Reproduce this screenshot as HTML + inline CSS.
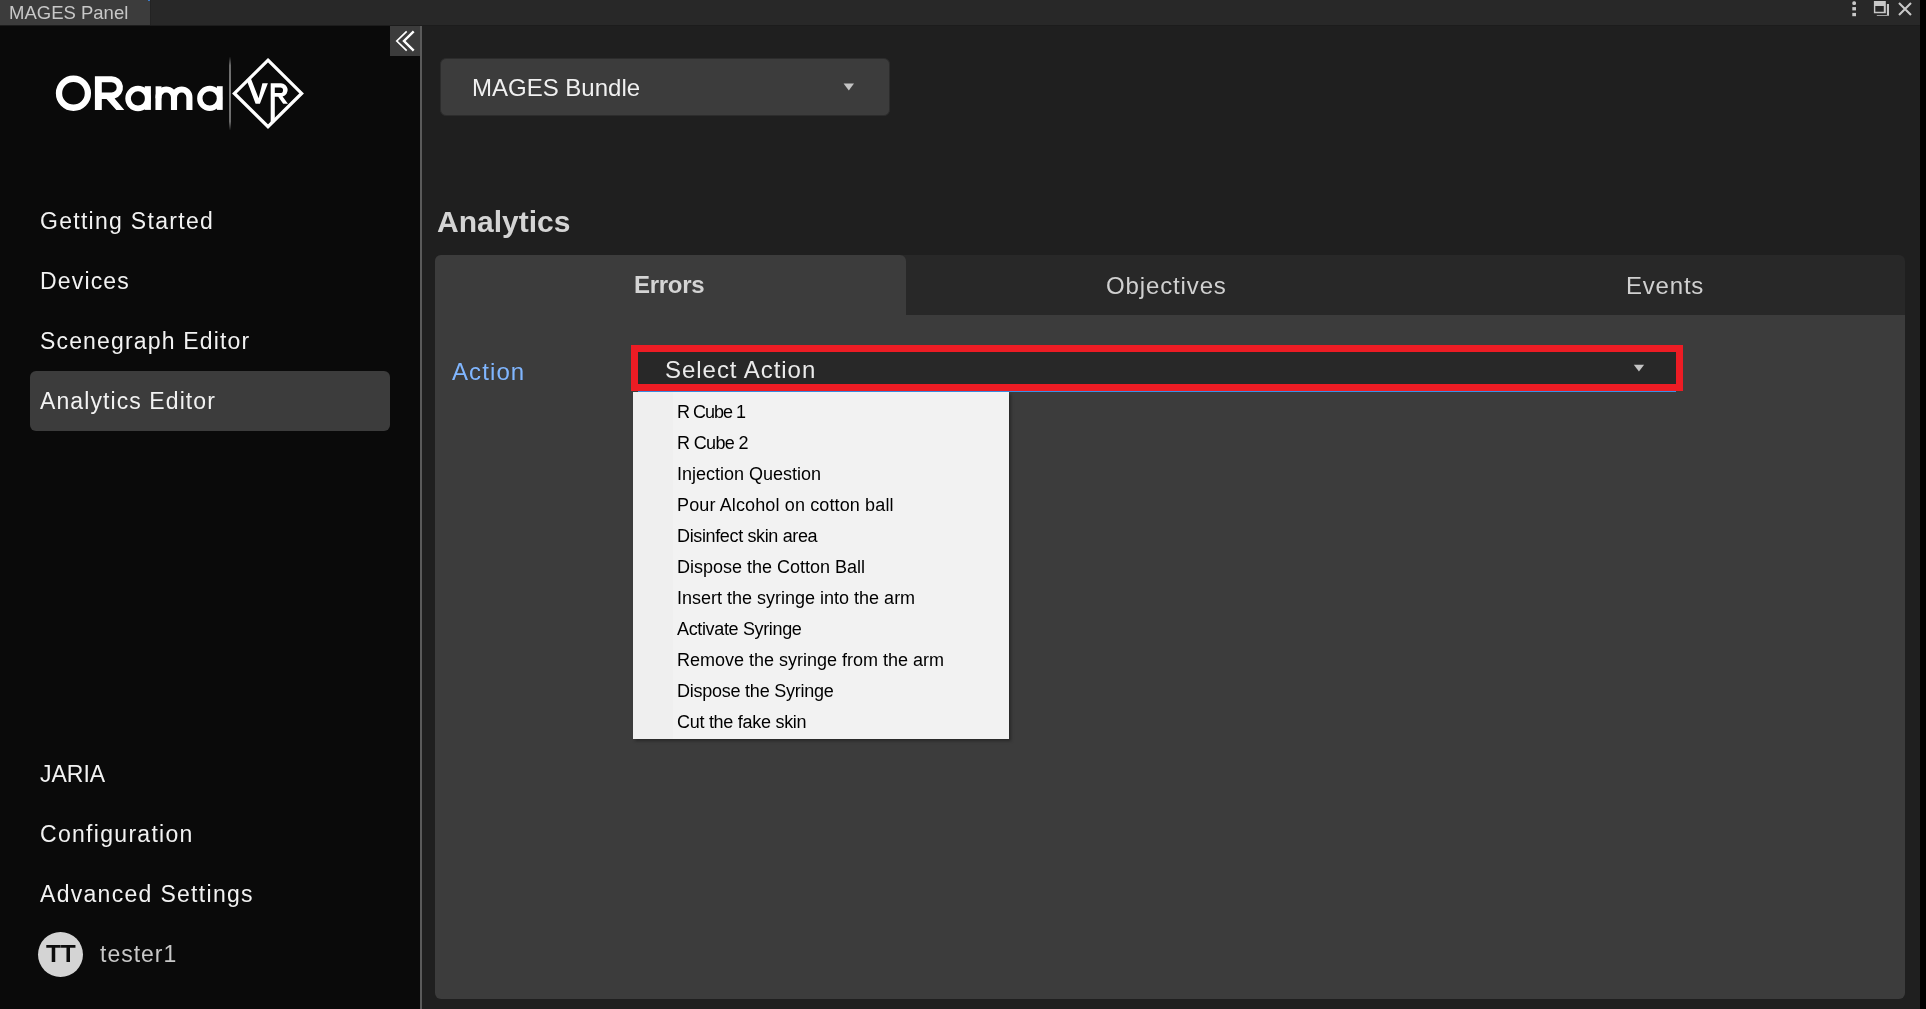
<!DOCTYPE html>
<html>
<head>
<meta charset="utf-8">
<style>
html,body{margin:0;padding:0;width:1926px;height:1009px;overflow:hidden;background:#000;}
body{position:relative;font-family:"Liberation Sans",sans-serif;}
.a{position:absolute;}
.t{position:absolute;white-space:nowrap;line-height:1;will-change:transform;}
#topbar{left:0;top:0;width:1920px;height:25px;background:#282828;}
#topline{left:0;top:25px;width:1920px;height:1px;background:#1c1c1c;}
#tab{left:0;top:0;width:150px;height:25px;background:#3c3c3c;}
#tabsep{left:150px;top:0;width:1px;height:25px;background:#232323;}
#sidebar{left:0;top:26px;width:420px;height:983px;background:#0a0a0a;}
#divider{left:420px;top:26px;width:2px;height:983px;background:#5a5a5a;}
#main{left:422px;top:26px;width:1498px;height:983px;background:#1f1f1f;}
#collapse{left:390px;top:26px;width:30px;height:30px;background:#3c3c3c;}
#navsel{left:30px;top:371px;width:360px;height:60px;background:#3c3c3c;border-radius:6px;}
.nav{color:#f0f0f0;font-size:23px;}
#bundle{left:440px;top:58px;width:448px;height:56px;background:#3c3c3c;border:1px solid #2c2c2c;border-radius:6px;}
#tabsbar{left:435px;top:255px;width:1470px;height:60px;background:#282828;border-radius:6px 6px 0 0;}
#errtab{left:435px;top:255px;width:471px;height:60px;background:#3c3c3c;border-radius:6px 6px 0 0;}
#panel{left:435px;top:315px;width:1470px;height:684px;background:#3c3c3c;border-radius:0 0 6px 6px;}
#redbox{left:631px;top:345px;width:1052px;height:46px;background:#ed1c24;}
#selbox{left:638px;top:352px;width:1038px;height:32px;background:#282828;}
#blueline{left:638px;top:391px;width:1038px;height:1px;background:#3a8ee6;}
#list{left:633px;top:392px;width:376px;height:347px;background:#f2f2f2;box-shadow:2px 2px 3px rgba(0,0,0,0.35);}
#gutter{left:633px;top:392px;width:40px;height:347px;background:#efefef;}
.li{color:#000;font-size:17.5px;left:678px;}
#avatar{left:38px;top:932px;width:45px;height:45px;border-radius:50%;background:#d4d4d4;}
</style>
</head>
<body>
<div class="a" id="topbar"></div>
<div class="a" id="topline"></div>
<div class="a" id="tab"></div>
<div class="a" id="tabsep"></div>
<div class="a" style="left:148px;top:0;width:2px;height:1px;background:#3a7ac8;"></div>
<div class="t" id="mp" style="left:9px;top:3.54px;font-size:18.5px;color:#c8c8c8;">MAGES Panel</div>

<div class="a" id="sidebar"></div>
<div class="a" id="divider"></div>
<div class="a" id="main"></div>
<div class="a" id="collapse"></div>
<div class="a" id="navsel"></div>

<div class="a" id="bundle"></div>
<div class="a" id="tabsbar"></div>
<div class="a" id="errtab"></div>
<div class="a" id="panel"></div>
<div class="a" id="redbox"></div>
<div class="a" id="selbox"></div>
<div class="a" id="blueline"></div>
<div class="a" id="list"></div>
<div class="a" id="gutter"></div>
<div class="a" id="avatar"></div>

<svg class="a" style="left:0;top:0;" width="420" height="140" viewBox="0 0 420 140">
 <g fill="#fff">
  <!-- O -->
  <ellipse cx="73.45" cy="93.25" rx="14.45" ry="14.5" fill="none" stroke="#fff" stroke-width="6.3"/>
  <!-- R -->
  <path fill-rule="evenodd" d="M94.9,76.2 H111.65 A11.35,11.35 0 0 1 114.6,98.5 L124.3,109.9 H116.3 L106.5,98.9 H101.8 V109.9 H94.9 Z M101.8,82.3 H111.6 A5.1,5.1 0 0 1 111.6,92.5 H101.8 Z"/>
  <!-- a1 -->
  <ellipse cx="138" cy="98.45" rx="9.9" ry="9.95" fill="none" stroke="#fff" stroke-width="5.6"/>
  <rect x="144.8" y="86.2" width="6.1" height="23.7"/>
  <!-- m -->
  <path d="M158.5,110 V97.2 A7.75,7.75 0 0 1 174,97.2 V110 M174,97.2 A7.7,7.7 0 0 1 189.4,97.2 V110" fill="none" stroke="#fff" stroke-width="6.1"/>
  <rect x="155.6" y="86.3" width="5.9" height="12"/>
  <!-- a2 -->
  <ellipse cx="209.7" cy="98.4" rx="9.85" ry="9.9" fill="none" stroke="#fff" stroke-width="5.4"/>
  <rect x="216.9" y="86.2" width="5.8" height="23.7"/>
 </g>
 <defs><linearGradient id="sepg" x1="0" y1="0" x2="0" y2="1"><stop offset="0" stop-color="#0a0a0a"/><stop offset="0.12" stop-color="#6a6a6a"/><stop offset="0.5" stop-color="#7a7a7a"/><stop offset="0.88" stop-color="#6a6a6a"/><stop offset="1" stop-color="#0a0a0a"/></linearGradient></defs><rect x="229" y="56.5" width="2" height="74" fill="url(#sepg)"/>
 <path d="M268,60.2 L301.6,93.4 L268,126.6 L234.4,93.4 Z" fill="none" stroke="#fff" stroke-width="3.3"/>
 <path fill="#fff" d="M246.5,79.8 L250.9,78.6 L258.6,98.2 L262.4,83.3 H267.9 L259.9,103.8 H255.6 Z"/>
 <path fill="#fff" fill-rule="evenodd" d="M270.7,83.3 H280.8 A6.7,6.7 0 0 1 282.6,96.5 L287.9,103.8 H283.2 L278.2,96.8 H274.8 V121.8 L270.7,125.4 Z M274.8,87.4 H280.2 A2.85,2.85 0 0 1 280.2,93.1 H274.8 Z"/>
</svg>
<svg class="a" style="left:390px;top:26px;" width="30" height="30" viewBox="0 0 30 30">
 <path d="M16.7,5.4 L6.8,15 L16.7,24.6" fill="none" stroke="#fff" stroke-width="1.7"/>
 <path d="M23.7,5.4 L14,15 L23.7,24.6" fill="none" stroke="#fff" stroke-width="2.4"/>
</svg>
<svg class="a" style="left:838px;top:78px;" width="22" height="18" viewBox="0 0 22 18">
 <path d="M5.6,5.6 H16 L10.8,12.6 Z" fill="#c4c4c4"/>
</svg>
<svg class="a" style="left:1628px;top:359px;" width="22" height="18" viewBox="0 0 22 18">
 <path d="M5.8,5.8 H16.1 L10.95,12.6 Z" fill="#c4c4c4"/>
</svg>
<svg class="a" style="left:1840px;top:0;" width="80" height="25" viewBox="0 0 80 25">
 <g fill="#c8c8c8">
  <rect x="12.3" y="1.2" width="3.7" height="3.7" rx="1.5"/>
  <rect x="12.3" y="7.1" width="3.7" height="3.3"/>
  <rect x="12.3" y="12.9" width="3.7" height="3.3"/>
  <path fill-rule="evenodd" d="M33.9,1.1 H45.8 V13.2 H33.9 Z M35.3,6 V11.8 H43.8 V6 Z"/>
  <path d="M46.9,4 H49 V15.8 H36.8 V15 H46.9 Z"/>
 </g>
 <path d="M59,3 L71,15 M71,3 L59,15" stroke="#c8c8c8" stroke-width="2.1" fill="none"/>
</svg>

<div class="t" id="n1" style="left:40px;top:210.03px;font-size:23px;color:#f2f2f2;font-weight:400;letter-spacing:1.29px;">Getting Started</div>
<div class="t" id="n2" style="left:40px;top:269.53px;font-size:23px;color:#f2f2f2;font-weight:400;letter-spacing:1.17px;">Devices</div>
<div class="t" id="n3" style="left:40px;top:329.73px;font-size:23px;color:#f2f2f2;font-weight:400;letter-spacing:1.16px;">Scenegraph Editor</div>
<div class="t" id="n4" style="left:40px;top:389.53px;font-size:23px;color:#f2f2f2;font-weight:400;letter-spacing:1.09px;">Analytics Editor</div>
<div class="t" id="n5" style="left:40px;top:762.53px;font-size:23px;color:#f2f2f2;font-weight:400;letter-spacing:0px;">JARIA</div>
<div class="t" id="n6" style="left:40px;top:822.53px;font-size:23px;color:#f2f2f2;font-weight:400;letter-spacing:1.3px;">Configuration</div>
<div class="t" id="n7" style="left:40px;top:882.53px;font-size:23px;color:#f2f2f2;font-weight:400;letter-spacing:1.3px;">Advanced Settings</div>
<div class="t" id="tester" style="left:100px;top:943.23px;font-size:23px;color:#c8c8c8;font-weight:400;letter-spacing:1.0px;">tester1</div>
<div class="t" id="tt" style="left:45.5px;top:941.56px;font-size:24.5px;color:#0d0d0d;font-weight:700;letter-spacing:-0.3px;">TT</div>
<div class="t" id="bundletxt" style="left:472px;top:76.28px;font-size:24px;color:#f0f0f0;font-weight:400;">MAGES Bundle</div>
<div class="t" id="analytics" style="left:437px;top:207.2px;font-size:30px;color:#d4d4d4;font-weight:700;">Analytics</div>
<div class="t" id="errors" style="left:634px;top:273.38px;font-size:24px;color:#d4d4d4;font-weight:700;letter-spacing:-0.3px;">Errors</div>
<div class="t" id="objectives" style="left:1106px;top:273.58px;font-size:24px;color:#d0d0d0;font-weight:400;letter-spacing:0.87px;">Objectives</div>
<div class="t" id="events" style="left:1626px;top:273.58px;font-size:24px;color:#d0d0d0;font-weight:400;letter-spacing:0.8px;">Events</div>
<div class="t" id="action" style="left:452px;top:359.58px;font-size:24px;color:#80b6ff;font-weight:400;letter-spacing:1.1px;">Action</div>
<div class="t" id="seltxt" style="left:665px;top:357.88px;font-size:24px;color:#ebebeb;font-weight:400;letter-spacing:0.96px;">Select Action</div>
<div class="t" id="li0" style="left:677px;top:402.66px;font-size:18px;color:#000;font-weight:400;letter-spacing:-1.0px;">R Cube 1</div>
<div class="t" id="li1" style="left:677px;top:433.66px;font-size:18px;color:#000;font-weight:400;letter-spacing:-0.63px;">R Cube 2</div>
<div class="t" id="li2" style="left:677px;top:464.66px;font-size:18px;color:#000;font-weight:400;">Injection Question</div>
<div class="t" id="li3" style="left:677px;top:495.66px;font-size:18px;color:#000;font-weight:400;letter-spacing:0.13px;">Pour Alcohol on cotton ball</div>
<div class="t" id="li4" style="left:677px;top:526.66px;font-size:18px;color:#000;font-weight:400;letter-spacing:-0.36px;">Disinfect skin area</div>
<div class="t" id="li5" style="left:677px;top:557.66px;font-size:18px;color:#000;font-weight:400;">Dispose the Cotton Ball</div>
<div class="t" id="li6" style="left:677px;top:588.66px;font-size:18px;color:#000;font-weight:400;">Insert the syringe into the arm</div>
<div class="t" id="li7" style="left:677px;top:619.66px;font-size:18px;color:#000;font-weight:400;letter-spacing:-0.35px;">Activate Syringe</div>
<div class="t" id="li8" style="left:677px;top:650.66px;font-size:18px;color:#000;font-weight:400;">Remove the syringe from the arm</div>
<div class="t" id="li9" style="left:677px;top:681.66px;font-size:18px;color:#000;font-weight:400;letter-spacing:-0.24px;">Dispose the Syringe</div>
<div class="t" id="li10" style="left:677px;top:712.66px;font-size:18px;color:#000;font-weight:400;letter-spacing:-0.28px;">Cut the fake skin</div>
</body>
</html>
